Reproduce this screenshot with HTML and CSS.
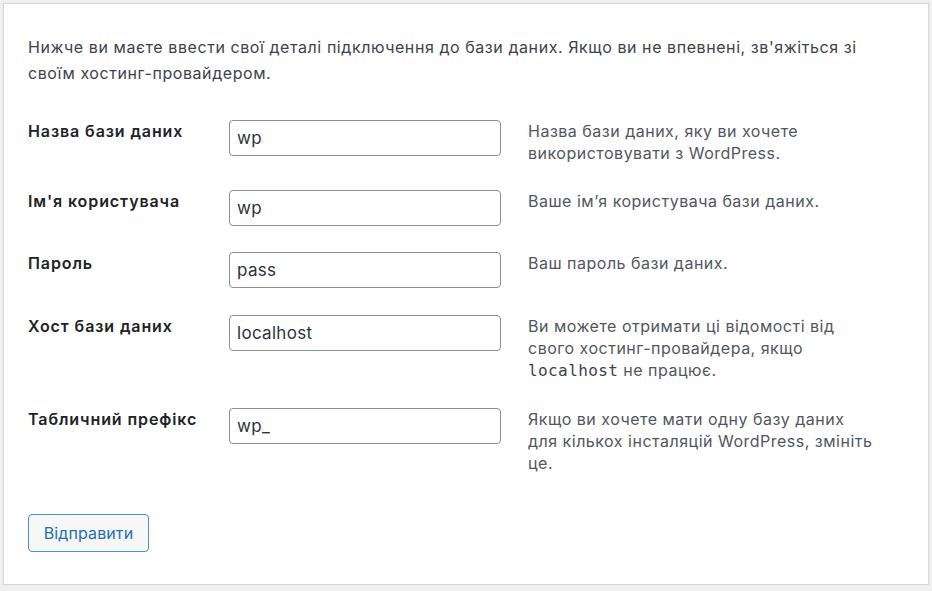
FILE: index.html
```html
<!DOCTYPE html>
<html lang="uk">
<head>
<meta charset="utf-8">
<title>Налаштування бази даних</title>
<link rel="stylesheet" href="styles.css">
</head>
<body>
<main class="card">
  <p class="intro">Нижче ви маєте ввести свої деталі підключення до бази даних. Якщо ви не впевнені, зв'яжіться зі<br>своїм хостинг-провайдером.</p>
  <form class="form-table">
    <div class="row">
      <label class="label" for="dbname">Назва бази даних</label>
      <input class="field" id="dbname" type="text" value="wp">
      <p class="desc">Назва бази даних, яку ви хочете<br>використовувати з WordPress.</p>
    </div>
    <div class="row">
      <label class="label" for="uname">Ім'я користувача</label>
      <input class="field" id="uname" type="text" value="wp">
      <p class="desc">Ваше ім’я користувача бази даних.</p>
    </div>
    <div class="row">
      <label class="label" for="pwd">Пароль</label>
      <input class="field" id="pwd" type="text" value="pass">
      <p class="desc">Ваш пароль бази даних.</p>
    </div>
    <div class="row">
      <label class="label" for="dbhost">Хост бази даних</label>
      <input class="field" id="dbhost" type="text" value="localhost">
      <p class="desc">Ви можете отримати ці відомості від<br>свого хостинг-провайдера, якщо<br><code class="code">localhost</code> не працює.</p>
    </div>
    <div class="row">
      <label class="label" for="prefix">Табличний префікс</label>
      <input class="field" id="prefix" type="text" value="wp_">
      <p class="desc">Якщо ви хочете мати одну базу даних<br>для кількох інсталяцій WordPress, змініть<br>це.</p>
    </div>
  </form>
  <button class="button" type="button">Відправити</button>
</main>
</body>
</html>
```
FILE: styles.css
```css
html, body {
  margin: 0;
  padding: 0;
}
body {
  background: #f0f0f1;
  font-family: Inter, "Noto Sans", "Liberation Sans", sans-serif;
  color: #3c434a;
  padding: 3px 3px 6px;
}
.card {
  background: #fff;
  border: 1px solid #d6d6d8;
  box-shadow: 0 0 0 1px #ebebec;
  padding: 30px 24px 32px;
  height: 582px;
  box-sizing: border-box;
}
.intro {
  margin: 0 0 34px;
  font-size: 16px;
  line-height: 26px;
  letter-spacing: 0.57px;
  color: #3c434a;
}
.form-table {
  display: flex;
  flex-direction: column;
  gap: 26.2px;
  margin: 0;
}
.row {
  display: grid;
  grid-template-columns: 201px 272px 1fr;
  align-items: start;
}
.label {
  font-weight: 600;
  font-size: 16px;
  line-height: 22px;
  color: #1d2327;
  letter-spacing: 0.9px;
}
.field {
  box-sizing: border-box;
  width: 272px;
  height: 36px;
  margin: 0;
  padding: 0 7px;
  border: 1px solid #8c8f94;
  border-radius: 4px;
  background: #fff;
  font-family: Inter, "Noto Sans", "Liberation Sans", sans-serif;
  font-size: 17px;
  letter-spacing: 0.3px;
  color: #2c3338;
  outline: none;
}
.desc {
  margin: 0;
  padding-left: 27px;
  font-size: 16px;
  line-height: 22px;
  color: #50575e;
  letter-spacing: 0.5px;
  white-space: nowrap;
}
.code {
  font-family: "DejaVu Sans Mono", "Liberation Mono", monospace;
  font-size: 16px;
  letter-spacing: 0.4px;
  color: #3c434a;
}
.button {
  display: block;
  margin-top: 40px;
  box-sizing: border-box;
  width: 121px;
  height: 38px;
  padding: 0;
  border: 1px solid #4a90d0;
  border-radius: 4px;
  background: #f6f7f7;
  color: #2271b1;
  font-family: Inter, "Noto Sans", "Liberation Sans", sans-serif;
  font-size: 16px;
  letter-spacing: 0.1px;
  cursor: pointer;
}
```
